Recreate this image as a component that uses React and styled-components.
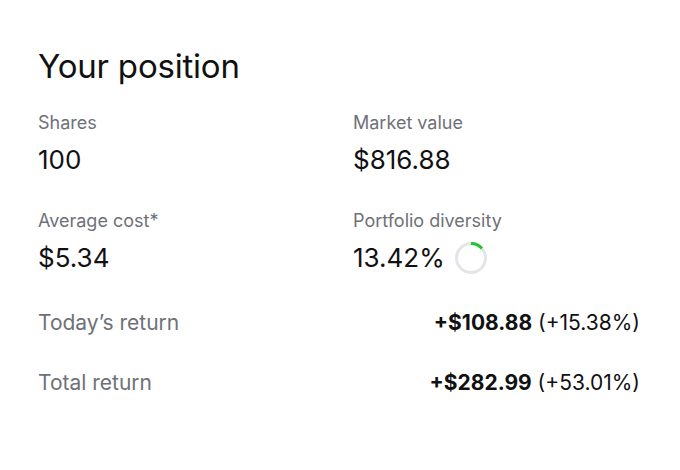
import * as React from 'react';
import styled, {createGlobalStyle} from 'styled-components';

const GlobalStyle = createGlobalStyle`
  body {
    margin: 0;
    background: #ffffff;
    font-family: Inter, 'Liberation Sans', sans-serif;
    color: #111111;
  }
`;

const Panel = styled.div`
  width: 680px;
  height: 470px;
  box-sizing: border-box;
  padding: 46px 40px 0 38px;
`;

const Title = styled.h1`
  margin: 0 0 25px;
  font-size: 33px;
  line-height: 40px;
  font-weight: 400;
  letter-spacing: -0.2px;
`;

const Grid = styled.div`
  display: grid;
  grid-template-columns: 315px 1fr;
  row-gap: 33px;
`;

const Stat = styled.div`
  display: flex;
  flex-direction: column;
  gap: 9px;
`;

const Label = styled.div`
  font-size: 18px;
  line-height: 24px;
  color: #6e7178;
`;

const Value = styled.div`
  display: flex;
  align-items: center;
  gap: 9px;
  height: 32px;
  font-size: 26px;
  line-height: 32px;
  color: #111111;
`;

const Returns = styled.div`
  margin-top: 18px;
`;

const ReturnRow = styled.div`
  display: flex;
  justify-content: space-between;
  align-items: center;
  height: 60px;
  font-size: 21px;
`;

const ReturnLabel = styled.span`
  color: #6e7178;
`;

const ReturnValue = styled.span`
  color: #111111;
  b {
    font-weight: 700;
  }
`;

function Ring({pct}) {
  const r = 14.5;
  const c = 2 * Math.PI * r;
  return (
    <svg width="34" height="34" viewBox="0 0 34 34">
      <circle cx="17" cy="17" r={r} fill="none" stroke="#e3e5e8" strokeWidth="3" />
      <circle
        cx="17"
        cy="17"
        r={r}
        fill="none"
        stroke="#21c433"
        strokeWidth="3"
        strokeDasharray={`${(c * pct) / 100} ${c}`}
        transform="rotate(-90 17 17)"
      />
    </svg>
  );
}

export default function App() {
  return (
    <>
      <GlobalStyle />
      <Panel>
        <Title>Your position</Title>
        <Grid>
          <Stat>
            <Label>Shares</Label>
            <Value>100</Value>
          </Stat>
          <Stat>
            <Label>Market value</Label>
            <Value>$816.88</Value>
          </Stat>
          <Stat>
            <Label>Average cost*</Label>
            <Value>$5.34</Value>
          </Stat>
          <Stat>
            <Label>Portfolio diversity</Label>
            <Value>
              <span>13.42%</span>
              <Ring pct={13.42} />
            </Value>
          </Stat>
        </Grid>
        <Returns>
          <ReturnRow>
            <ReturnLabel>Today’s return</ReturnLabel>
            <ReturnValue>
              <b>+$108.88</b> (+15.38%)
            </ReturnValue>
          </ReturnRow>
          <ReturnRow>
            <ReturnLabel>Total return</ReturnLabel>
            <ReturnValue>
              <b>+$282.99</b> (+53.01%)
            </ReturnValue>
          </ReturnRow>
        </Returns>
      </Panel>
    </>
  );
}
